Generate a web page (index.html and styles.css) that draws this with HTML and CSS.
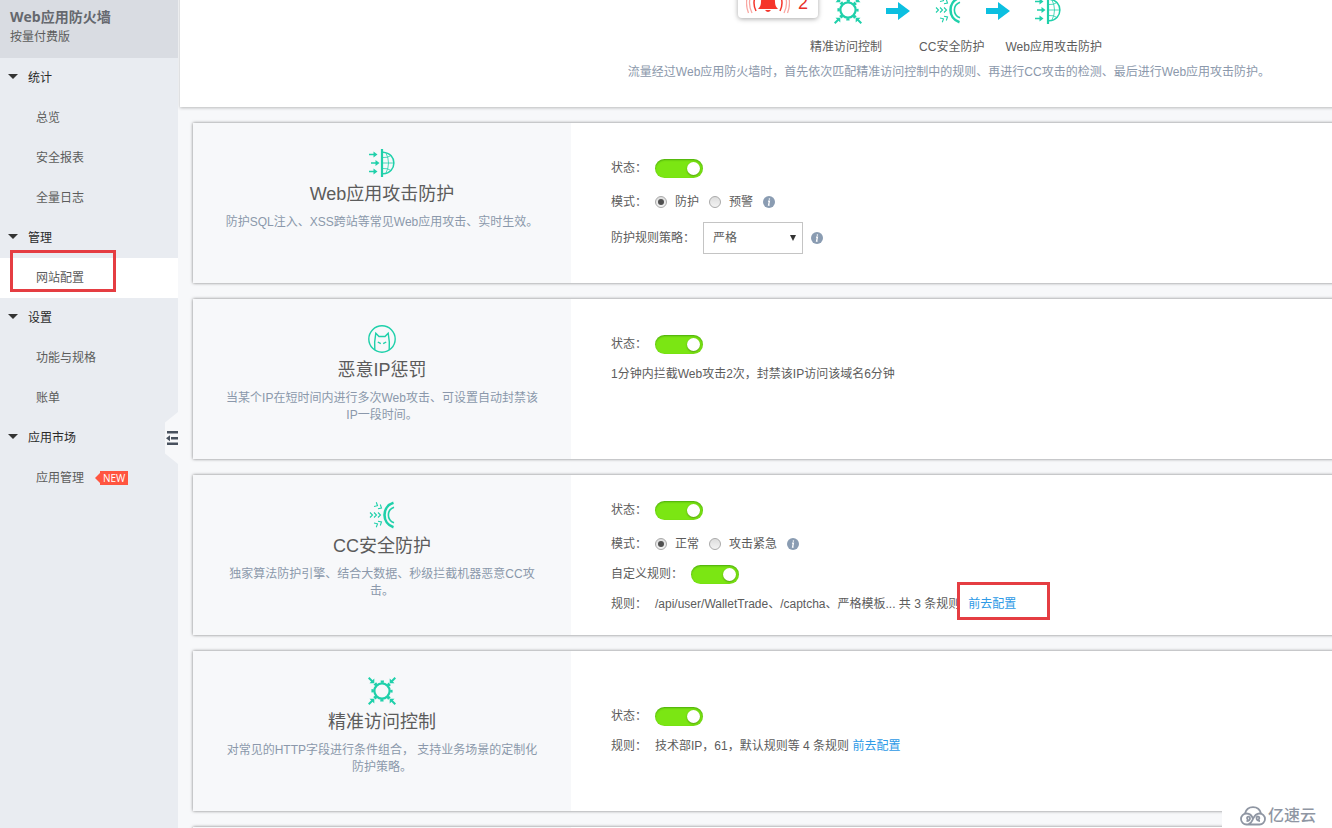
FILE: index.html
```html
<!DOCTYPE html>
<html lang="zh-CN">
<head>
<meta charset="utf-8">
<title>Web应用防火墙</title>
<link rel="stylesheet" href="styles.css">
</head>
<body>
<svg class="sprite" aria-hidden="true">
  <symbol id="i-gear" viewBox="0 0 28 28">
    <g fill="none" stroke="#1fd0aa" stroke-width="2.200">
      <circle cx="14" cy="14" r="7.600"/>
      <circle cx="14" cy="14" r="9.400" stroke-width="2.400" stroke-dasharray="3.200 4.183" stroke-dashoffset="1.600"/>
      <path d="M.7.700l4 4M27.300.700l-4 4M.7 27.300l4-4M27.300 27.300l-4-4" stroke-width="2"/>
    </g>
    <path fill="#1fd0aa" d="M6.300 6.300V1.500L1.500 6.300zM21.700 6.300V1.500l4.800 4.800zM6.300 21.700v4.800l-4.800-4.800zM21.700 21.700v4.800l4.800-4.800z"/>
  </symbol>
  <symbol id="i-cc" viewBox="0 0 28 28">
    <g fill="none" stroke="#1fd0aa">
      <path stroke-width="2.600" d="M25.500 1.800C13.500 5.500 13.500 22.500 25.500 26.200"/>
      <path stroke-width="1.600" d="M26 6.200C18.500 9 18.500 19 26 21.800"/>
      <path stroke-width="1.100" d="M2 11.500l2.500 2.500L2 16.500M6 11.500l2.500 2.500L6 16.500M10 11.500l2.500 2.500L10 16.500M8.300 1.200l1.200 3.500-3.500.8M12.300 3.500l1.200 3.500-3.500.8M6 22l3.500.8-1.200 3.500M10 20.200l3.500.8-1.200 3.500"/>
    </g>
  </symbol>
  <symbol id="i-web" viewBox="0 0 28 28">
    <g fill="none" stroke="#1fd0aa">
      <path stroke-width="2.200" d="M14 0v28"/>
      <path stroke-width="1.500" d="M15 3.200c14.500 1 14.500 20.600 0 21.600"/>
      <path stroke-width=".8" d="M15 14h11M15 8.500q4.500.5 8-2M15 19.500q4.500-.5 8 2M18 4q5 10 0 20"/>
      <path stroke-width="1.500" d="M1 5.500h6M3 14h6M1 22.500h6"/>
    </g>
    <path fill="#1fd0aa" d="M5.500 2.500l4 3-4 3zM7.500 11l4 3-4 3zM5.500 19.500l4 3-4 3z"/>
  </symbol>
  <symbol id="i-devil" viewBox="0 0 28 28">
    <g fill="none" stroke="#1fd0aa" stroke-width="1.400">
      <circle cx="14" cy="14" r="13.200"/>
      <path d="M6.800 24.800C6.300 19 6.800 13.500 7.800 8.200l3.200 3.300h6l3.200-3.300c1 5.300 1.500 10.800 1 16.600"/>
      <path d="M9.800 17l3 1.700M18.200 17l-3 1.700"/>
    </g>
  </symbol>
  <symbol id="i-arrow" viewBox="0 0 24 18">
    <path fill="#0cbfe0" d="M0 6h12V0l12 9-12 9v-6H0z"/>
  </symbol>
  <symbol id="i-info" viewBox="0 0 12 12">
    <circle cx="6" cy="6" r="6" fill="#8a9cb2"/>
    <path fill="none" stroke="#fff" stroke-width="1.300" d="M5 5.200h1.400L5.600 9.200h1M6.500 2.300l-.2 1.300"/>
  </symbol>
</svg>

<div class="page">
  <nav class="sidebar" aria-label="产品导航">
    <header class="product">
      <h1 class="product-name">Web应用防火墙</h1>
      <p class="product-plan">按量付费版</p>
    </header>
    <button class="group" type="button">统计</button>
    <a class="item" href="#">总览</a>
    <a class="item" href="#">安全报表</a>
    <a class="item" href="#">全量日志</a>
    <button class="group" type="button">管理</button>
    <a class="item item-active" href="#">网站配置<span class="mark mark-nav"></span></a>
    <button class="group" type="button">设置</button>
    <a class="item" href="#">功能与规格</a>
    <a class="item" href="#">账单</a>
    <button class="group" type="button">应用市场</button>
    <a class="item" href="#">应用管理<span class="badge">NEW</span></a>
    <button class="collapse" type="button" aria-label="收起导航">
      <svg viewBox="0 0 12 14" width="12" height="14"><path fill="#48515e" d="M1 0h11v2.500H1zM5 6h7v2.500H5zM0 7.200l4-3v6zM1 11.500h11V14H1z"/></svg>
    </button>
  </nav>

  <main class="main">
    <section class="hero">
      <div class="flow">
        <div class="alert">
          <svg viewBox="0 0 44 24" width="44" height="24">
            <path fill="#f5352b" d="M22 2c5 0 7 4 7 9 0 3 1 5 3 7H12c2-2 3-4 3-7 0-5 2-9 7-9zM19 19h6q-3 4-6 0z"/>
            <path fill="none" stroke="#f5352b" stroke-width="1.500" d="M10 4q-4 8 0 16M34 4q4 8 0 16"/>
            <path fill="none" stroke="#f9a7a2" stroke-width="1.300" d="M6 2q-5 10 0 20M38 2q5 10 0 20M2.500 2q-4 10 0 20M41.500 2q4 10 0 20"/>
          </svg>
          <span>2</span>
        </div>
        <svg class="icon"><use href="#i-gear"/></svg>
        <svg class="arrow"><use href="#i-arrow"/></svg>
        <svg class="icon"><use href="#i-cc"/></svg>
        <svg class="arrow"><use href="#i-arrow"/></svg>
        <svg class="icon"><use href="#i-web"/></svg>
      </div>
      <div class="flow-labels"><span>精准访问控制</span><span>CC安全防护</span><span>Web应用攻击防护</span></div>
      <p class="flow-note">流量经过Web应用防火墙时，首先依次匹配精准访问控制中的规则、再进行CC攻击的检测、最后进行Web应用攻击防护。</p>
    </section>

    <section class="card">
      <div class="intro">
        <svg class="icon"><use href="#i-web"/></svg>
        <h2 class="title">Web应用攻击防护</h2>
        <p class="desc">防护SQL注入、XSS跨站等常见Web应用攻击、实时生效。</p>
      </div>
      <div class="settings">
        <div class="row"><label for="s1">状态：</label><input class="switch" type="checkbox" id="s1" checked></div>
        <div class="row row-mode"><span>模式：</span>
          <span class="options">
            <label class="option"><input class="radio" type="radio" name="m1" checked>防护</label>
            <label class="option"><input class="radio" type="radio" name="m1">预警</label>
            <svg class="info"><use href="#i-info"/></svg>
          </span>
        </div>
        <div class="row row-select"><label for="policy">防护规则策略：</label>
          <span class="picker"><select class="select" id="policy"><option>严格</option><option>中等</option><option>宽松</option></select></span>
          <svg class="info"><use href="#i-info"/></svg>
        </div>
      </div>
    </section>

    <section class="card">
      <div class="intro">
        <svg class="icon"><use href="#i-devil"/></svg>
        <h2 class="title">恶意IP惩罚</h2>
        <p class="desc">当某个IP在短时间内进行多次Web攻击、可设置自动封禁该IP一段时间。</p>
      </div>
      <div class="settings">
        <div class="row"><label for="s2">状态：</label><input class="switch" type="checkbox" id="s2" checked></div>
        <div class="row">1分钟内拦截Web攻击2次，封禁该IP访问该域名6分钟</div>
      </div>
    </section>

    <section class="card">
      <div class="intro">
        <svg class="icon"><use href="#i-cc"/></svg>
        <h2 class="title">CC安全防护</h2>
        <p class="desc">独家算法防护引擎、结合大数据、秒级拦截机器恶意CC攻击。</p>
      </div>
      <div class="settings settings-full">
        <div class="row"><label for="s3">状态：</label><input class="switch" type="checkbox" id="s3" checked></div>
        <div class="row row-mode"><span>模式：</span>
          <span class="options">
            <label class="option"><input class="radio" type="radio" name="m3" checked>正常</label>
            <label class="option"><input class="radio" type="radio" name="m3">攻击紧急</label>
            <svg class="info"><use href="#i-info"/></svg>
          </span>
        </div>
        <div class="row"><label for="s4">自定义规则：</label><input class="switch" type="checkbox" id="s4" checked></div>
        <div class="row"><span>规则：</span><span>/api/user/WalletTrade、/captcha、严格模板... 共 3 条规则</span><a class="link" href="#">前去配置<span class="mark mark-link"></span></a></div>
      </div>
    </section>

    <section class="card">
      <div class="intro">
        <svg class="icon"><use href="#i-gear"/></svg>
        <h2 class="title">精准访问控制</h2>
        <p class="desc">对常见的HTTP字段进行条件组合， 支持业务场景的定制化防护策略。</p>
      </div>
      <div class="settings settings-short">
        <div class="row"><label for="s5">状态：</label><input class="switch" type="checkbox" id="s5" checked></div>
        <div class="row"><span>规则：</span><span>技术部IP，61，默认规则等 4 条规则 <a class="link" href="#">前去配置</a></span></div>
      </div>
    </section>

    <section class="card"><div class="intro"></div></section>
  </main>

  <div class="watermark">
    <svg viewBox="0 0 26 20" width="26" height="20" fill="none" stroke="#8f96a3" stroke-width="1.800">
      <path d="M5 7.500C6 3.500 9 1.200 13 1.200s7 2.300 8 6.300"/>
      <path d="M8 13.500a1.500 1.500 0 1 1 2-1.500c0 2-1.500 3-3.500 3M13 13c-1-3.500-3.500-5.500-6.500-5.500a5.500 5.500 0 0 0 0 11h13a5.500 5.500 0 0 0 0-11c-3.500 0-5 2-6.500 5.500-1 2.500-2.500 4.500-4.500 5.200"/>
      <path d="M18 13.500a1.500 1.500 0 1 0-1.500-2c0 2 1.500 3.500 3.500 3.500"/>
    </svg>
    <span>亿速云</span>
  </div>
</div>
</body>
</html>
```

FILE: styles.css
```css
* { box-sizing: border-box; }

body {
  margin: 0;
  overflow: hidden;
  color: #5c5c5c;
  background: #f7f8fa;
  font: 12px/18px "Liberation Sans", "Noto Sans CJK SC", sans-serif;
}

h1, h2, p { margin: 0; font-weight: normal; }
button, select { font: inherit; color: inherit; }
a { color: inherit; text-decoration: none; }
.sprite { position: absolute; width: 0; height: 0; }

.page { position: relative; display: flex; height: 100vh; overflow: hidden; }

/* sidebar */
.sidebar {
  position: relative;
  flex: 0 0 178px;
  display: flex;
  flex-direction: column;
  background: #e9ecf1;
}
.product { height: 58px; padding: 8px 10px; background: #d9dce2; }
.product-name { font: bold 14px/18px "Open Sans", "Noto Sans CJK SC", sans-serif; color: #65686e; }
.product-plan { line-height: 22px; }
.group, .item { display: flex; align-items: center; height: 40px; }
.group {
  gap: 10px;
  padding: 0 8px;
  border: 0;
  background: none;
  color: #2a2a2a;
}
.group::before {
  content: "";
  margin-bottom: 4px;
  border: 5px solid transparent;
  border-top-color: #333;
  border-bottom: 0;
}
.item { position: relative; padding-left: 36px; }
.item-active { background: #fff; }
.badge {
  position: relative;
  margin-left: 16px;
  padding: 0 3px;
  background: #ff5540;
  color: #fff;
  font: 10px/14px "Open Sans", sans-serif;
}
.badge::before {
  content: "";
  position: absolute;
  left: -5px;
  top: 2px;
  border: 5px solid transparent;
  border-right-color: #ff5540;
  border-left: 0;
}
.collapse {
  position: absolute;
  right: 0;
  top: 412px;
  display: flex;
  align-items: center;
  justify-content: flex-end;
  width: 13px;
  height: 52px;
  padding: 0;
  border: 0;
  background: #f7f8fa;
  clip-path: polygon(100% 0, 100% 100%, 0 80%, 0 20%);
}

/* highlight frames */
.mark { position: absolute; border: 3px solid #e53d42; pointer-events: none; }
.mark-nav { left: 10px; top: -8px; width: 106px; height: 42px; }
.mark-link { left: -11px; top: -13px; width: 93px; height: 38px; }

/* content */
.main { flex: 1 0 1540px; }
.hero {
  display: flex;
  flex-direction: column;
  align-items: center;
  margin: -18px 0 16px 2px;
  padding-bottom: 26px;
  background: #fff;
  box-shadow: 0 1px 3px rgba(0, 0, 0, .25);
}
.flow { display: flex; align-items: flex-end; gap: 24px; height: 42px; padding-right: 98px; }
.icon { display: block; width: 28px; height: 28px; }
.arrow { width: 24px; height: 18px; margin-bottom: 4px; }
.alert {
  display: flex;
  align-items: center;
  align-self: flex-start;
  gap: 8px;
  width: 80px;
  height: 36px;
  margin-right: -8px;
  padding-left: 8px;
  padding-top: 6px;
  border-radius: 4px;
  background: #fff;
  box-shadow: 0 1px 5px rgba(0, 0, 0, .35);
  color: #e8302a;
  font-size: 18px;
}
.flow-labels { display: flex; margin-top: 14px; padding-left: 14px; }
.flow-labels span + span { margin-left: 37px; }
.flow-labels span + span + span { margin-left: 21px; }
.flow-note { margin-top: 7px; color: #8b98ab; }

.card {
  display: flex;
  min-height: 160px;
  margin: 0 14px 16px 15px;
  background: #fff;
  box-shadow: 0 0 3px rgba(0, 0, 0, .5);
}
.intro {
  flex: 0 0 378px;
  display: flex;
  flex-direction: column;
  align-items: center;
  padding: 26px 32px 0;
  background: #f7f8fa;
}
.title { margin-top: 5px; font-size: 18px; line-height: 24px; }
.desc { margin-top: 8px; line-height: 17px; text-align: center; color: #8b98ab; }

.settings { padding: 30px 40px 0; }
.settings-full { padding-top: 20px; }
.settings-short { padding-top: 50px; }
.row { display: flex; align-items: center; gap: 8px; height: 30px; }
.row-mode { height: 34px; padding-top: 4px; }
.row-select { height: 42px; }
.options { display: flex; align-items: center; gap: 10px; }
.option { display: flex; align-items: center; gap: 8px; }
.info { width: 12px; height: 12px; }

.switch {
  appearance: none;
  display: flex;
  align-items: center;
  justify-content: flex-end;
  width: 48px;
  height: 19px;
  margin: 0;
  padding: 0 3px;
  border-radius: 10px;
  background: #7be613;
  box-shadow: inset 0 1px 2px rgba(0, 80, 0, .4);
}
.switch::before {
  content: "";
  width: 13px;
  height: 13px;
  border-radius: 50%;
  background: #fff;
  box-shadow: 0 1px 2px rgba(0, 0, 0, .3);
}
.switch:not(:checked) { justify-content: flex-start; background: #ccc; }

.radio {
  appearance: none;
  display: grid;
  place-items: center;
  width: 12px;
  height: 12px;
  margin: 0;
  border: 1px solid #a9a9a9;
  border-radius: 50%;
  background: linear-gradient(#ddd, #f3f3f3);
}
.radio:checked::before {
  content: "";
  width: 6px;
  height: 6px;
  border-radius: 50%;
  background: #505050;
}

.picker { position: relative; }
.picker::after {
  content: "";
  position: absolute;
  right: 7px;
  top: 13px;
  border: 3px solid transparent;
  border-top: 6px solid #333;
  border-bottom: 0;
  pointer-events: none;
}
.select {
  appearance: none;
  display: block;
  width: 100px;
  height: 32px;
  padding: 0 9px;
  border: 1px solid #c4c4c4;
  border-radius: 0;
  background: #fff;
}
.link { position: relative; color: #2d9ae6; }

.watermark {
  position: absolute;
  right: 0;
  bottom: 0;
  display: flex;
  align-items: center;
  gap: 2px;
  height: 24px;
  padding: 0 16px 0 18px;
  background: #fff;
  color: #8f96a3;
  font-size: 16px;
  font-weight: 500;
}
```
